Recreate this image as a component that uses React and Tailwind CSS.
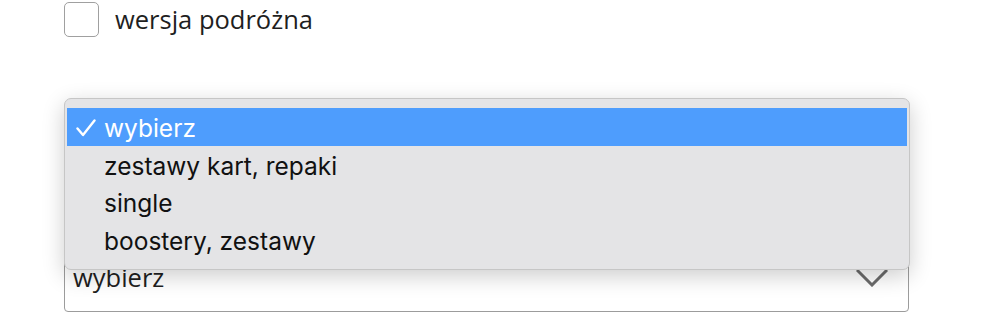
import React from 'react';

const options = ['wybierz', 'zestawy kart, repaki', 'single', 'boostery, zestawy'];

function Chevron() {
  return (
    <svg width="32" height="18" viewBox="0 0 32 18" fill="none">
      <path d="M2 2 L16 16 L30 2" stroke="#6b6b6b" strokeWidth="3" strokeLinecap="square" />
    </svg>
  );
}

function Check() {
  return (
    <svg width="20" height="18" viewBox="0 0 20 18" fill="none">
      <path d="M1.5 9.5 L7 16 L18.5 1.5" stroke="#fff" strokeWidth="2.4" strokeLinecap="round" strokeLinejoin="round" />
    </svg>
  );
}

export default function App() {
  return (
    <div className="relative w-[999px] h-[327px] bg-white overflow-hidden font-['Open_Sans',sans-serif] text-[#1f1f1f]">
      <div className="pl-[64px] pt-[2px]">
        {/* Checkbox */}
        <label className="flex items-center gap-[16px]">
          <span className="w-[35px] h-[35px] rounded-[5px] border border-[#a0a0a0] bg-white" />
          <span className="text-[25.5px] leading-[35px]">wersja podróżna</span>
        </label>

        {/* Product type: label hidden under the open menu */}
        <div className="mt-[54px] w-[845px]">
          <div className="h-[32px]" />
          <div className="mt-[134px] h-[55px] rounded-[4px] border border-[#9c9c9c] flex items-center justify-between pl-[8px] pr-[20px]">
            <span className="text-[25.5px] leading-[32px] -mt-[16px]">wybierz</span>
            <span className="-mt-[14px]"><Chevron /></span>
          </div>
        </div>
      </div>

      {/* Open native menu */}
      <div className="absolute left-[64px] top-[98px] w-[846px] h-[172px] rounded-[7px] border border-[#c6c6c6] bg-[#e4e4e6] py-[9px] px-[2px] shadow-[0_6px_22px_rgba(0,0,0,0.2)] font-['Inter',sans-serif] text-[24.5px] text-[#111]">
        {options.map((o, i) => (
          <div
            key={o}
            className={
              i === 0
                ? 'h-[38px] flex items-center bg-[#4e9dfd] text-white'
                : 'h-[37.5px] flex items-center'
            }
          >
            <span className="w-[37px] pl-[9px] pt-[2px] flex items-center">{i === 0 ? <Check /> : null}</span>
            <span className="pt-[3px]">{o}</span>
          </div>
        ))}
      </div>
    </div>
  );
}
